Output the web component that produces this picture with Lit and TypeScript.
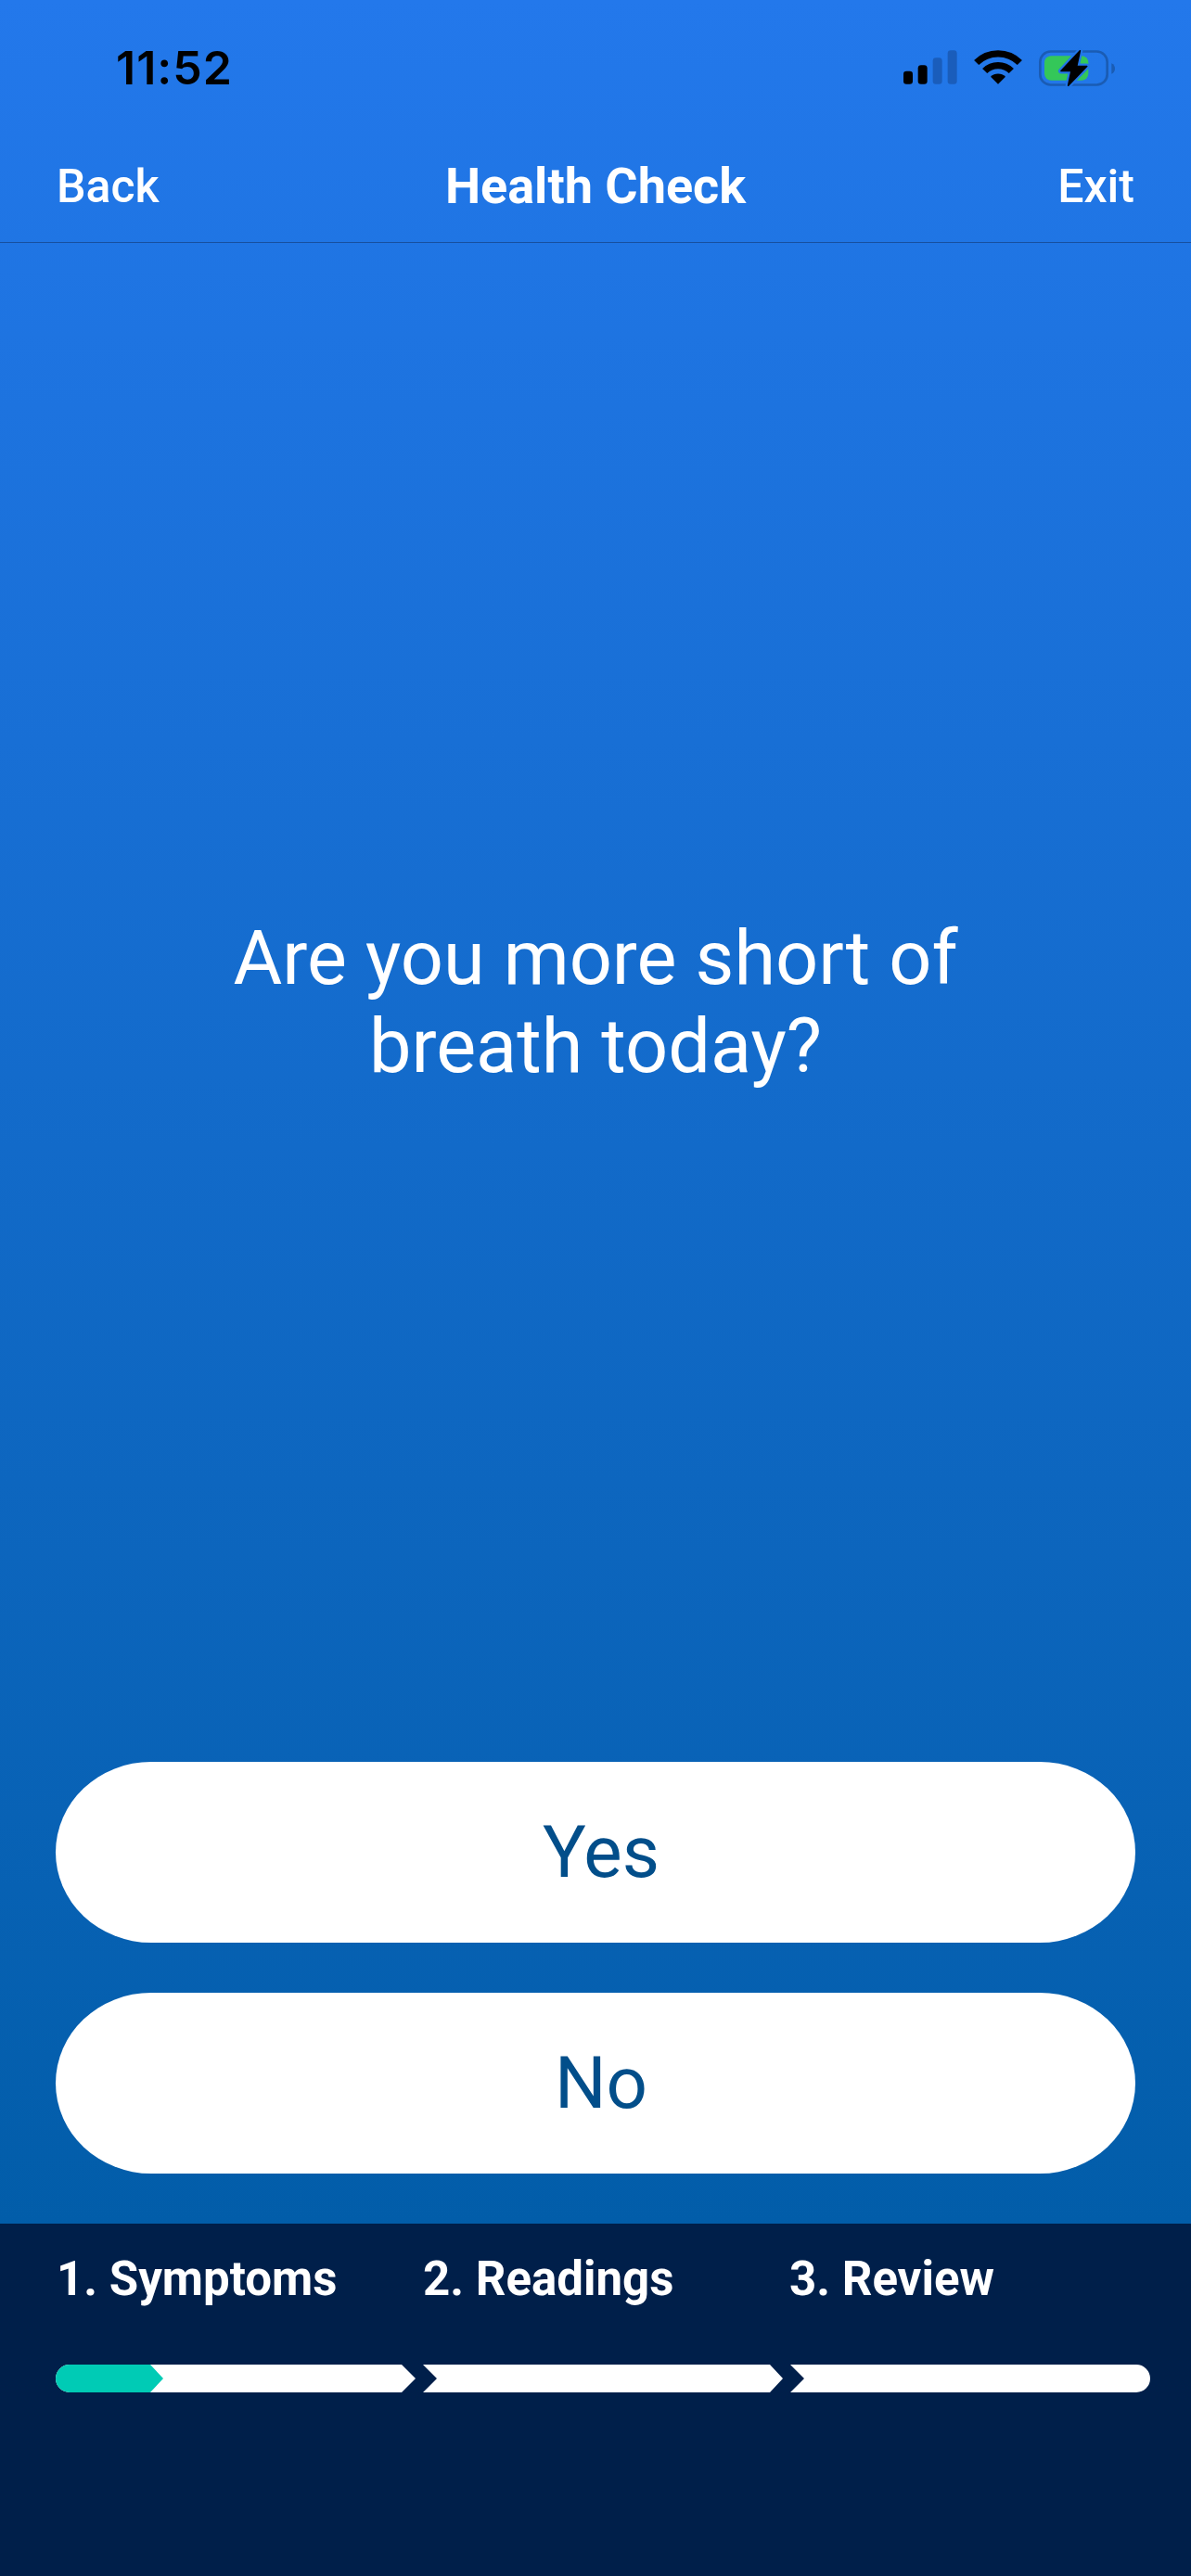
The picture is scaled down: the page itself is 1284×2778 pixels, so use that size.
import { LitElement, css, html } from "lit";
import { customElement } from "lit/decorators.js";

const STEPS = ["1. Symptoms", "2. Readings", "3. Review"];
const ANSWERS = ["Yes", "No"];

@customElement("app-root")
export class AppRoot extends LitElement {
  static styles = css`
    :host {
      display: block;
      width: 1284px;
      height: 2778px;
      font-family: Roboto, "Noto Sans", sans-serif;
    }

    .screen {
      width: 100%;
      height: 100%;
      display: flex;
      flex-direction: column;
      background: #001f4a;
    }

    .top {
      flex: 1;
      display: flex;
      flex-direction: column;
      background: linear-gradient(180deg, #2378eb 0%, #025da9 100%);
    }

    .status {
      height: 120px;
      box-sizing: border-box;
      padding: 44px 82px 0 125px;
      display: flex;
      justify-content: space-between;
      align-items: flex-start;
    }

    .time {
      font-family: Inter, Roboto, sans-serif;
      font-size: 50px;
      line-height: 58px;
      font-weight: 600;
      letter-spacing: 1px;
      color: #000;
    }

    .status-icons {
      display: flex;
      align-items: flex-start;
      padding-top: 10px;
      gap: 19px;
    }

    .status-icons svg {
      display: block;
      overflow: visible;
    }

    .nav {
      height: 142px;
      box-sizing: border-box;
      border-bottom: 1px solid #17509f;
      padding: 20px 61px 0;
      display: grid;
      grid-template-columns: 1fr auto 1fr;
      align-items: center;
      color: #fff;
      font-size: 50px;
      font-weight: 500;
    }

    .nav .title {
      font-size: 54px;
      font-weight: 700;
    }

    .nav .exit {
      text-align: right;
    }

    .question {
      flex: 1;
      display: flex;
      align-items: center;
      justify-content: center;
      text-align: center;
      color: #fff;
      font-size: 81px;
      line-height: 95px;
    }

    .answers {
      display: flex;
      flex-direction: column;
      gap: 54px;
      padding: 0 60px 54px;
    }

    .answer {
      height: 195px;
      border-radius: 103px / 97.5px;
      background: #fff;
      color: #024e8a;
      font-size: 78px;
      display: flex;
      align-items: center;
      justify-content: center;
      padding-left: 12px;
    }

    .footer {
      height: 380px;
      box-sizing: border-box;
      padding: 29px 0 0 60px;
      background: #001f4a;
    }

    .steps {
      display: grid;
      grid-template-columns: repeat(3, 395px);
      padding-left: 1px;
      color: #fff;
      font-size: 51px;
      font-weight: 700;
      line-height: 62px;
    }

    .progress {
      display: block;
      margin-top: 61px;
    }
  `;

  private statusIcons() {
    return html`
      <div class="status-icons">
        <svg width="58" height="37" viewBox="0 0 174 110">
          <rect x="0" y="68" width="30" height="42" rx="10" fill="#000" />
          <rect x="47" y="48" width="30" height="62" rx="10" fill="#000" />
          <rect x="95" y="24" width="30" height="86" rx="10" fill="#1a5dbb" />
          <rect x="143" y="0" width="30" height="110" rx="10" fill="#1a5dbb" />
        </svg>
        <svg width="50" height="37" viewBox="0 0 150 110">
          <path d="M5 40A99 99 0 0 1 145 40" fill="none" stroke="#000" stroke-width="22" />
          <path d="M32 67A61 61 0 0 1 118 67" fill="none" stroke="#000" stroke-width="22" />
          <path d="M75 110L51 86A34 34 0 0 1 99 86Z" fill="#000" />
        </svg>
        <svg width="82" height="39" viewBox="0 0 246 116">
          <rect x="4" y="4" width="217" height="108" rx="34" fill="none" stroke="#1a5cb4" stroke-width="8" />
          <path d="M235 42C243 46 246 52 246 59C246 67 243 73 235 77Z" fill="#1a5cb4" />
          <rect x="18" y="18" width="142" height="80" rx="22" fill="#34c759" />
          <path
            d="M133 2L72 67H105L95 114L155 52H122Z"
            fill="#000"
            stroke="#2176e8"
            stroke-width="18"
            stroke-linejoin="round"
          />
          <path
            d="M133 2L72 67H105L95 114L155 52H122Z"
            fill="#000"
            stroke="#000"
            stroke-width="5"
            stroke-linejoin="round"
          />
        </svg>
      </div>
    `;
  }

  render() {
    return html`
      <div class="screen">
        <div class="top">
          <div class="status">
            <span class="time">11:52</span>
            ${this.statusIcons()}
          </div>
          <div class="nav">
            <span>Back</span>
            <span class="title">Health Check</span>
            <span class="exit">Exit</span>
          </div>
          <div class="question"><span>Are you more short of<br />breath today?</span></div>
          <div class="answers">
            ${ANSWERS.map((a) => html`<div class="answer">${a}</div>`)}
          </div>
        </div>
        <div class="footer">
          <div class="steps">${STEPS.map((s) => html`<span>${s}</span>`)}</div>
          <svg class="progress" width="1180" height="30" viewBox="0 0 1180 30">
            <path d="M15 0H373L388 15L373 30H15A15 15 0 0 1 15 0Z" fill="#fff" />
            <path d="M15 0H102L116 15L102 30H15A15 15 0 0 1 15 0Z" fill="#00cbb5" />
            <path d="M396 0H770L784 15L770 30H396L411 15Z" fill="#fff" />
            <path d="M792 0H1165A15 15 0 0 1 1165 30H792L807 15Z" fill="#fff" />
          </svg>
        </div>
      </div>
    `;
  }
}
